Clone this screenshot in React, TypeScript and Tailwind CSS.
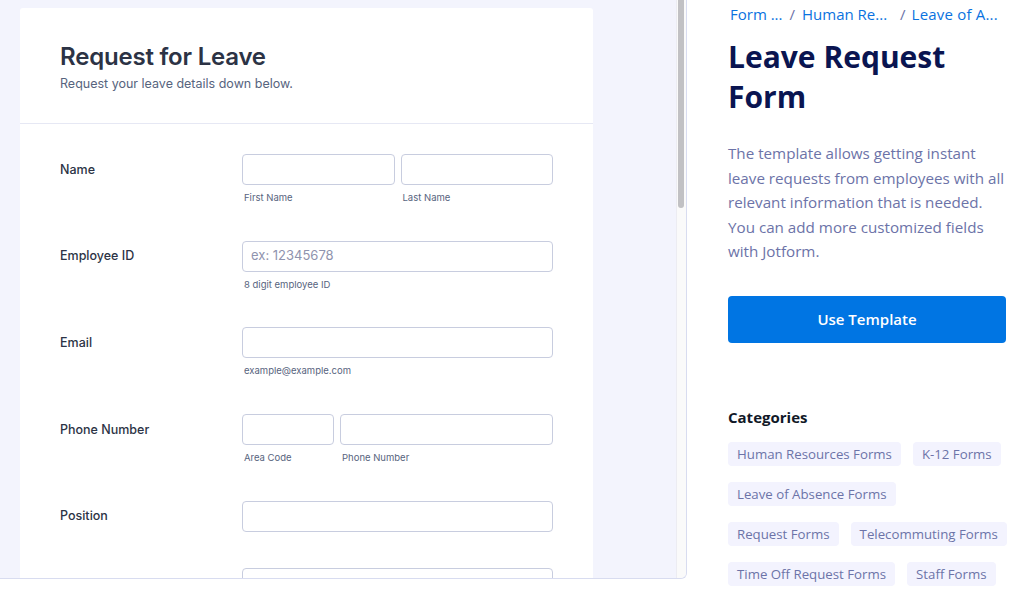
import * as React from 'react'

const formFont = { fontFamily: 'Inter, "Liberation Sans", sans-serif' }
const sideFont = { fontFamily: '"Open Sans", "Liberation Sans", sans-serif' }

const CATEGORIES = [
  'Human Resources Forms',
  'K-12 Forms',
  'Leave of Absence Forms',
  'Request Forms',
  'Telecommuting Forms',
  'Time Off Request Forms',
  'Staff Forms',
]

function Input({ className = '', placeholder }: { className?: string; placeholder?: string }) {
  return (
    <div
      className={
        'h-[31px] rounded-[4px] border border-[#c8cddf] bg-white flex items-center px-[8px] text-[13px] text-[#8f93ae] ' +
        className
      }
    >
      {placeholder}
    </div>
  )
}

function Sub({ children }: { children: React.ReactNode }) {
  return <div className="mt-[7px] h-[12px] text-[9.5px] leading-[12px] text-[#57647e] pl-[2px]">{children}</div>
}

function Row({ label, children }: { label: string; children: React.ReactNode }) {
  return (
    <div className="flex">
      <div className="w-[182px] h-[31px] flex items-center pt-[1px] text-[12.5px] font-medium text-[#2c3345]">{label}</div>
      <div className="w-[311px]">{children}</div>
    </div>
  )
}

function FormPreview() {
  return (
    <div className="w-[687px] h-[579px] shrink-0 flex bg-[#f3f4fd] border-r border-b border-[#d8dcf0] rounded-br-[6px] overflow-hidden">
      <div className="flex-1 overflow-hidden pt-[8px] pl-[20px]" style={formFont}>
        <div className="w-[573px] bg-white rounded-t-[3px]">
          <div className="h-[116px] border-b border-[#e6e8f4] pl-[40px] pt-[33px]">
            <h1 className="text-[24px] leading-[32px] font-semibold text-[#2c3345] tracking-[-0.2px]">Request for Leave</h1>
            <p className="mt-[3px] text-[12.5px] leading-[16px] text-[#57647e]">Request your leave details down below.</p>
          </div>
          <div className="pl-[40px] pt-[30px] flex flex-col gap-[36.7px] pb-[40px]">
            <Row label="Name">
              <div className="flex gap-[6px]">
                <div className="flex-1">
                  <Input />
                  <Sub>First Name</Sub>
                </div>
                <div className="flex-1">
                  <Input />
                  <Sub>Last Name</Sub>
                </div>
              </div>
            </Row>
            <Row label="Employee ID">
              <Input placeholder="ex: 12345678" />
              <Sub>8 digit employee ID</Sub>
            </Row>
            <Row label="Email">
              <Input />
              <Sub>example@example.com</Sub>
            </Row>
            <Row label="Phone Number">
              <div className="flex gap-[6px]">
                <div className="w-[92px]">
                  <Input />
                  <Sub>Area Code</Sub>
                </div>
                <div className="flex-1">
                  <Input />
                  <Sub>Phone Number</Sub>
                </div>
              </div>
            </Row>
            <Row label="Position">
              <Input />
            </Row>
            <Row label="">
              <Input />
            </Row>
          </div>
        </div>
      </div>
      {/* scrollbar */}
      <div className="w-[10px] shrink-0 bg-[#fafafa] border-l border-[#ececf2] pl-[1px] pr-[1px]">
        <div className="h-[208px] w-[6px] rounded-b-[3px] bg-[#c1c1c4]" />
      </div>
    </div>
  )
}

function Sidebar() {
  return (
    <div className="w-[280px] ml-[41px] shrink-0" style={sideFont}>
      <div className="flex items-center h-[29px] text-[15px] text-[#0a72e0] whitespace-nowrap pl-[2px]">
        <span>Form ...</span>
        <span className="ml-[7px] mr-[7px] text-[#6c73a8]">/</span>
        <span>Human Re...</span>
        <span className="ml-[13px] mr-[6px] text-[#6c73a8]">/</span>
        <span className="tracking-[0.2px]">Leave of A...</span>
      </div>
      <h2 className="mt-[8px] text-[30px] leading-[40px] font-bold text-[#0a1551]">Leave Request Form</h2>
      <p className="mt-[24px] text-[15.2px] leading-[24.6px] text-[#6c73a8]">
        The template allows getting instant leave requests from employees with all relevant information that is needed.
        You can add more customized fields with Jotform.
      </p>
      <button className="mt-[32px] w-[278px] h-[47px] rounded-[4px] bg-[#0075e3] text-white text-[15px] font-semibold">
        Use Template
      </button>
      <h3 className="mt-[63px] text-[15px] font-bold text-[#111827] leading-[22px]">Categories</h3>
      <div className="mt-[14px] flex flex-wrap gap-x-[12px] gap-y-[16px]">
        {CATEGORIES.map((c) => (
          <span key={c} className="h-[24px] px-[9px] rounded-[4px] bg-[#f3f3fe] text-[#6c73a8] text-[13.25px] leading-[24px] whitespace-nowrap">
            {c}
          </span>
        ))}
      </div>
    </div>
  )
}

export default function App() {
  return (
    <div className="w-[1029px] h-[603px] bg-white flex overflow-hidden">
      <FormPreview />
      <Sidebar />
    </div>
  )
}
